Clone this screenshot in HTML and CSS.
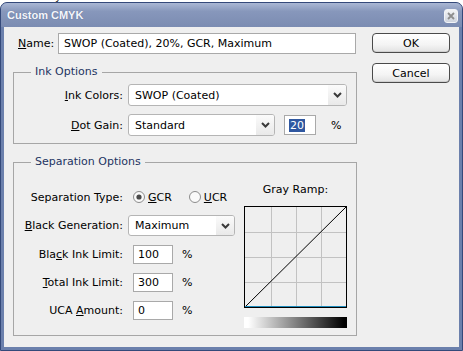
FILE: index.html
```html
<!DOCTYPE html>
<html>
<head>
<meta charset="utf-8">
<link rel="stylesheet" href="styles.css">
</head>
<body>
<div class="backdrop"><span class="backdrop-text">Synchronized for consistent color.</span></div>
<div class="window">
  <div class="titlebar">
    <span class="title">Custom CMYK</span>
    <span class="close">
      <svg width="14" height="14" viewBox="0 0 14 14"><path d="M4 4 L10 10 M10 4 L4 10" stroke="#8d8d8d" stroke-width="1.8" fill="none"/></svg>
    </span>
  </div>
  <div class="client">
    <div class="main">
      <div class="name-row">
        <span class="name-label"><u>N</u>ame:</span>
        <div class="textbox name-box">SWOP (Coated), 20%, GCR, Maximum</div>
      </div>

      <fieldset class="group ink">
        <legend>Ink Options</legend>
        <div class="form-grid ink-grid">
          <span class="lbl"><u>I</u>nk Colors:</span>
          <div class="select ink-select"><span class="sel-text">SWOP (Coated)</span><span class="arrow"><svg width="9" height="6" viewBox="0 0 9 6"><path d="M1 1 L4.5 4.5 L8 1" stroke="#3a3a3a" stroke-width="2" fill="none"/></svg></span></div>
          <span class="lbl"><u>D</u>ot Gain:</span>
          <div class="dot-row">
            <div class="select dot-select"><span class="sel-text">Standard</span><span class="arrow"><svg width="9" height="6" viewBox="0 0 9 6"><path d="M1 1 L4.5 4.5 L8 1" stroke="#3a3a3a" stroke-width="2" fill="none"/></svg></span></div>
            <div class="textbox small dot-box"><span class="hilite">20</span></div>
            <span class="pct dot-pct">%</span>
          </div>
        </div>
      </fieldset>

      <fieldset class="group sep">
        <legend>Separation Options</legend>
        <div class="sep-body">
          <div class="form-grid sep-grid">
            <span class="lbl">Separation Type:</span>
            <div class="radios">
              <span class="radio">
                <svg width="12" height="12" viewBox="0 0 12 12"><circle cx="6" cy="6" r="5.5" fill="#fafafa" stroke="#8c8c8c"/><circle cx="6" cy="6" r="2.6" fill="#4a4a4a"/></svg>
                <span><u>G</u>CR</span>
              </span>
              <span class="radio">
                <svg width="12" height="12" viewBox="0 0 12 12"><circle cx="6" cy="6" r="5.5" fill="#fafafa" stroke="#8c8c8c"/></svg>
                <span><u>U</u>CR</span>
              </span>
            </div>
            <span class="lbl"><u>B</u>lack Generation:</span>
            <div class="select bg-select"><span class="sel-text">Maximum</span><span class="arrow"><svg width="9" height="6" viewBox="0 0 9 6"><path d="M1 1 L4.5 4.5 L8 1" stroke="#3a3a3a" stroke-width="2" fill="none"/></svg></span></div>
            <span class="lbl">Bla<u>c</u>k Ink Limit:</span>
            <div class="num-row"><div class="textbox small num-box">100</div><span class="pct">%</span></div>
            <span class="lbl"><u>T</u>otal Ink Limit:</span>
            <div class="num-row"><div class="textbox small num-box">300</div><span class="pct">%</span></div>
            <span class="lbl">UCA <u>A</u>mount:</span>
            <div class="num-row"><div class="textbox small num-box">0</div><span class="pct">%</span></div>
          </div>
          <div class="ramp">
            <div class="ramp-label">Gray Ramp:</div>
            <svg class="ramp-graph" width="103" height="102" viewBox="0 0 103 102">
              <g stroke="#c2c2c2" stroke-width="1">
                <line x1="27.5" y1="1" x2="27.5" y2="101"/>
                <line x1="52.5" y1="1" x2="52.5" y2="101"/>
                <line x1="77.5" y1="1" x2="77.5" y2="101"/>
                <line x1="1" y1="26.5" x2="102" y2="26.5"/>
                <line x1="1" y1="51.5" x2="102" y2="51.5"/>
                <line x1="1" y1="76.5" x2="102" y2="76.5"/>
              </g>
              <rect x="0.5" y="0.5" width="102" height="101" fill="none" stroke="#000"/>
              <line x1="1" y1="101" x2="102" y2="1" stroke="#000" stroke-width="1"/>
              <line x1="1" y1="100.5" x2="102" y2="100.5" stroke="#1e8cbc"/>
            </svg>
            <div class="ramp-gradient"></div>
          </div>
        </div>
      </fieldset>
    </div>

    <div class="buttons">
      <div class="btn">OK</div>
      <div class="btn">Cancel</div>
    </div>
  </div>
</div>
</body>
</html>
```

FILE: styles.css
```css
* { box-sizing: border-box; }
html, body { margin: 0; padding: 0; }
body {
  width: 463px;
  height: 351px;
  overflow: hidden;
  background: #ffffff;
  font-family: "DejaVu Sans", sans-serif;
  font-size: 11px;
  color: #000;
}
u { text-decoration: underline; text-underline-offset: 1px; }

.backdrop { height: 2px; overflow: hidden; }
.backdrop-text { display: block; margin-top: -9px; margin-left: 48px; line-height: 11px; color: #222; }

.window {
  width: 463px;
  height: 349px;
  border: 1px solid #34497a;
  border-radius: 7px 7px 0 0;
  background: #6b80ac;
  display: flex;
  flex-direction: column;
}
.titlebar {
  height: 24px;
  flex: none;
  display: flex;
  align-items: center;
  justify-content: space-between;
  padding: 0 4px 0 6px;
  border-radius: 6px 6px 0 0;
  background: linear-gradient(#aab7d4, #8797bb 35%, #7b8cb2);
}
.title {
  font-family: "Liberation Sans", sans-serif;
  font-weight: bold;
  font-size: 11px;
  color: #f4f6fb;
  text-shadow: 0 0 1px #56678f;
}
.close {
  width: 14px;
  height: 14px;
  margin-top: 1px;
  border: 1px solid #f2f4f8;
  border-radius: 3px;
  background: linear-gradient(#f3f4f6, #cfd4de);
  display: flex;
}
.close svg { margin: -1px; }

.client {
  margin: 0 3px 3px;
  height: 320px;
  background: #efefef;
  padding: 6px 0 0 9px;
  display: grid;
  grid-template-columns: 344px 78px;
  column-gap: 15px;
  align-items: start;
}

.textbox {
  background: #fff;
  border: 1px solid #a9a9a9;
  display: flex;
  align-items: center;
  white-space: nowrap;
}
.name-row { display: flex; align-items: center; height: 21px; }
.name-label { width: 45px; padding-left: 5px; }
.name-box { width: 298px; height: 21px; padding-left: 5px; }

.group {
  margin: 0;
  padding: 0;
  border: 1px solid #a6a6a6;
  min-width: 0;
}
.group legend {
  margin-left: 17px;
  padding: 0 4px;
  line-height: 14px;
  color: #1d3462;
}
.ink { margin-top: 11px; }
.sep { margin-top: 11px; }

.form-grid {
  display: grid;
  grid-template-columns: 114px auto;
  align-items: center;
}
.lbl { text-align: right; padding-right: 5px; white-space: nowrap; }

.ink-grid { padding: 5px 0 7px; grid-template-rows: 22px 22px; row-gap: 8px; }

.select {
  height: 22px;
  background: #fff;
  border: 1px solid #b5b5b5;
  border-radius: 3px;
  display: flex;
  align-items: stretch;
  overflow: hidden;
}
.sel-text { flex: 1; padding-left: 6px; display: flex; align-items: center; white-space: nowrap; }
.arrow {
  width: 18px;
  display: flex;
  align-items: center;
  justify-content: center;
  background: linear-gradient(#fbfbfb, #e9e9e9);
}
.ink-select { width: 219px; }
.dot-row { display: flex; align-items: center; }
.dot-select { width: 147px; }
.small { height: 20px; padding-left: 4px; }
.dot-box { width: 32px; margin-left: 9px; }
.hilite { background: #2f57a0; color: #fff; padding: 0 1px; line-height: 13px; }
.pct { margin-left: 15px; }

.sep-body { display: flex; padding: 14px 9px 7px 0; justify-content: space-between; }
.sep-grid {
  margin-top: 4px;
  width: 225px;
  grid-template-rows: 20px 21px 20px 20px 20px;
  row-gap: 8px;
  align-self: flex-start;
}
.radios { display: flex; align-items: center; margin-left: 5px; }
.radio { display: flex; align-items: center; gap: 3px; }
.radio + .radio { margin-left: 17px; }
.radio svg { flex: none; }
.bg-select { width: 107px; height: 21px; }
.num-row { display: flex; align-items: center; align-self: end; }
.num-box { width: 40px; height: 19px; margin-left: 5px; }
.num-row .pct { margin-left: 9px; }

.ramp { width: 103px; display: flex; flex-direction: column; align-items: center; }
.ramp-label { line-height: 14px; }
.ramp-graph { display: block; margin-top: 9px; }
.ramp-gradient {
  width: 103px;
  height: 11px;
  margin-top: 9px;
  background: linear-gradient(to right, #ffffff 0%, #ffffff 4%, #000000 97%);
}

.buttons { display: flex; flex-direction: column; gap: 10px; }
.btn {
  height: 20px;
  border: 1px solid #4a4a4a;
  border-radius: 4px;
  background: linear-gradient(#ffffff, #f4f4f4 60%, #e2e2e2);
  display: flex;
  align-items: center;
  justify-content: center;
  box-shadow: inset 0 -1px 0 #d0d0d0;
}
```
